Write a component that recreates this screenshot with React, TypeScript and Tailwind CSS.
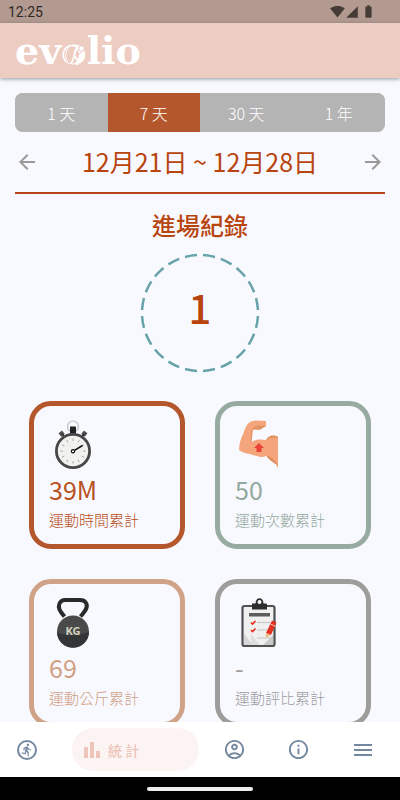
import React from "react";
import {
  MdArrowBack,
  MdArrowForward,
  MdBarChart,
  MdBatteryFull,
  MdDirectionsRun,
  MdInfoOutline,
  MdMenu,
  MdOutlineAccountCircle,
  MdSignalCellular4Bar,
  MdSignalWifi4Bar,
} from "react-icons/md";

const ranges = ["1 天", "7 天", "30 天", "1 年"];

const StopwatchIcon = () => {
  const ticks = Array.from({ length: 12 }, (_, i) => i * 30);
  return (
    <svg width="46" height="50" viewBox="0 0 46 50" fill="none">
      <circle cx="24" cy="6.5" r="5.5" stroke="#b9bdc4" strokeWidth="1.2" />
      <rect x="21" y="6.5" width="6" height="7" fill="#222" />
      <rect x="-2.2" y="-2" width="4.4" height="4.4" fill="#4d4d4d" transform="translate(12.5 13.5) rotate(-38)" />
      <rect x="-2.2" y="-2" width="4.4" height="4.4" fill="#4d4d4d" transform="translate(35.5 13.5) rotate(38)" />
      <path d="M13 14l3 4M35 14l-3 4" stroke="#333" strokeWidth="2" />
      <circle cx="24" cy="31" r="16.6" fill="#f1f1ef" stroke="#474747" strokeWidth="2.8" />
      {ticks.map((angle) => (
        <path key={angle} d="M24 18.5v2.4" stroke="#999" strokeWidth="0.8" transform={`rotate(${angle} 24 31)`} />
      ))}
      <path d="M25.5 30.3l8-4.8" stroke="#111" strokeWidth="1.5" />
      <circle cx="24" cy="31.3" r="1.6" fill="#fff" stroke="#111" strokeWidth="1.2" />
    </svg>
  );
};

const ArmIcon = () => (
  <svg width="46" height="50" viewBox="0 0 46 50">
    <path d="M30 22C32 17 35 15.500 38 15.500C40 15.500 42 16 43 17V49C42.500 46 42 45 39 43C34 40 32 37 30 34z" fill="#df905f" />
    <path d="M31 21C34 18 37 17 43 18V46C41 40 36 37 31 35z" fill="#f5a57c" />
    <path
      d="M15 2Q18 .5 22 .5L31 1V6.500Q28 7 26 9Q25 10 22 9.500H18C17 13 17 17 17 22Q20 19.500 25 19.500C30 19.500 34 21 35 25C35 31 34 35 30 36.500Q26 37.500 22 36Q18 35.500 15 34Q8 33 4 30C4 24 6 18 8.500 13C10 8 12 4 15 2z"
      fill="#f5a57c"
    />
    <path d="M17 9.500Q19 5.500 23 5.500H28L31 6.500Q28 7 26 9Q25 10 22 9.500H18C17 13 17 17 17 22Q14 17 17 9.500z" fill="#e39467" />
    <path d="M24 23l5 5h-2.500v4h-5v-4H19z" fill="#ea4335" />
  </svg>
);

const KettlebellIcon = () => (
  <svg width="46" height="50" viewBox="0 0 46 50">
    <path
      d="M15.500 18.500C11 13 8.500 10 10.500 5.500Q12 2 16 2h15q5 0 6.500 4c1.500 4-2 8-6 12.500"
      fill="none"
      stroke="#292b2a"
      strokeWidth="4"
    />
    <circle cx="24" cy="33.500" r="16" fill="#4a4a4a" />
    <path d="M8 34c9 4.500 23 4 32 0c-1 21-31 21-32 0z" fill="#333536" />
    <text
      x="24"
      y="37"
      textAnchor="middle"
      fill="#d0d3bd"
      className="font-['Noto_Sans'] text-[11px] font-bold"
    >
      KG
    </text>
  </svg>
);

const ClipboardIcon = () => (
  <svg width="46" height="50" viewBox="0 0 46 50" fill="none">
    <rect x="7.500" y="8" width="32" height="40" rx="2" fill="#f0f0f0" stroke="#4e5052" strokeWidth="2.200" />
    <path d="M38 37L28 47h10z" fill="#c9c9c9" />
    <path d="M9 36l9 11H9z" fill="#d6d6d6" />
    <path d="M16 36l9 11h-9z" fill="#dedede" />
    <path d="M17 5.500h3.500c0-7 8-7 8 0H31q1 0 1 1v5H17z" fill="#2d2d2d" />
    <circle cx="24.500" cy="4" r="2" fill="#f8f9ff" />
    <rect x="14" y="15" width="21" height="3.500" fill="#5b5d5f" />
    <path d="M22 24.500h13M22 32h10M22 40h13" stroke="#c4c4c4" strokeWidth="1.200" />
    <path d="M16 24.500l1.500 1.500 3-3M16 32l1.500 1.500 3-3" stroke="#ea2a1d" strokeWidth="1.600" />
    <path d="M37 22.500l4.500 2L36 37l-5-2z" fill="#e23022" />
    <path d="M35.500 26l5 2.500" stroke="#f6c3ba" strokeWidth="1" />
    <path d="M31 35l5 2-5.500 3z" fill="#edb886" />
  </svg>
);

const stats = [
  { value: "39M", label: "運動時間累計", tone: "border-[#b5572c] text-[#b8501d]", icon: <StopwatchIcon /> },
  { value: "50", label: "運動次數累計", tone: "border-[#98aba1] text-[#93a99d]", icon: <ArmIcon /> },
  { value: "69", label: "運動公斤累計", tone: "border-[#d0a389] text-[#d0a085]", icon: <KettlebellIcon /> },
  { value: "-", label: "運動評比累計", tone: "border-[#9d9d9b] text-[#9d9d9d]", icon: <ClipboardIcon /> },
];

const StatusBar = () => (
  <div className="flex h-[23px] shrink-0 items-center bg-[#b29a90] pl-2 pr-6 text-[#453c38]">
    <span className="flex-1 font-[Roboto] text-sm leading-5 text-[#2e2826]">12:25</span>
    <MdSignalWifi4Bar size={15} />
    <MdSignalCellular4Bar size={14} />
    <MdBatteryFull size={15} className="ml-0.5" />
  </div>
);

const Header = () => (
  <header className="relative z-10 flex h-[55px] shrink-0 items-center bg-[#edccc2] px-[15px] shadow-[0_1px_4px_rgba(70,90,100,0.6)]">
    <h1 className="flex font-['DejaVu_Serif'] text-[38px] font-bold leading-[55px] text-white">
      <span>ev</span>
      <span className="relative">
        o
        {/* climber inside the first o */}
        <svg className="absolute left-0 top-[21px]" width="26" height="22" viewBox="0 0 26 22" fill="none">
          <ellipse cx="10.500" cy="11" rx="7.500" ry="8.800" fill="#edccc2" />
          <path d="M9 2C4 6 3 15 8 20M5 3C1 8 1 14 5 18" stroke="#fff" strokeWidth="1" />
          <path d="M16 4l-2 4M14 7l-1 6-3 7M13.500 12l3 4v5" stroke="#fff" strokeWidth="1.800" />
          <path d="M15 9l3 1.500 3-3" stroke="#edccc2" strokeWidth="1" />
          <circle cx="15.500" cy="5" r="1.400" fill="#fff" />
          <circle cx="20.500" cy="4.500" r="3.200" fill="#edccc2" />
          <circle cx="20.500" cy="4.500" r="2.200" fill="#fff" />
        </svg>
      </span>
      <span>lio</span>
    </h1>
  </header>
);

const StatCard = ({ value, label, tone, icon }: (typeof stats)[number]) => (
  <div className={`h-[148px] rounded-[22px] border-5 px-[15px] pt-[14px] ${tone}`}>
    {icon}
    <p className="text-[25px] leading-[38px]">{value}</p>
    <p className="text-[15px] font-light leading-6">{label}</p>
  </div>
);

const BottomNav = () => (
  <nav className="flex h-[55px] shrink-0 items-center bg-white pr-[25px] pl-[17px] text-[#74889f]">
    <button aria-label="運動" className="flex size-5 items-center justify-center rounded-full border-2">
      <MdDirectionsRun size={14} className="shrink-0" />
    </button>
    <button className="ml-[35px] flex h-[43px] w-[127px] items-center gap-1 rounded-full bg-[#fbf4f2] pl-2 text-sm font-medium text-[#edc5ba]">
      <MdBarChart size={24} />
      <span>統 計</span>
    </button>
    <div className="flex flex-1 justify-between pl-6">
      <button aria-label="帳號">
        <MdOutlineAccountCircle size={23} />
      </button>
      <button aria-label="資訊">
        <MdInfoOutline size={23} />
      </button>
      <button aria-label="選單">
        <MdMenu size={24} />
      </button>
    </div>
  </nav>
);

const App = () => {
  return (
    <div className="flex h-screen flex-col bg-[#f8f9ff] font-['Noto_Sans_CJK_TC',sans-serif]">
      <StatusBar />
      <Header />
      <main className="min-h-0 flex-1 overflow-y-auto pb-8 [scrollbar-width:none]">
        <section className="px-[15px] pt-[15px] text-[#b8440e]">
          <div className="grid h-[39px] grid-cols-4 overflow-hidden rounded-lg bg-[#b4b4b4] text-base font-light text-white">
            {ranges.map((range) => (
              <button key={range} className={range === "7 天" ? "bg-[#b5572c]" : "bg-[#b4b4b4]"}>
                {range}
              </button>
            ))}
          </div>
          <div className="flex h-[62px] items-center justify-between border-b-2 border-[#b8441a]">
            <button aria-label="上一週" className="text-[#999]">
              <MdArrowBack size={24} />
            </button>
            <p className="text-[25px]">12月21日 ~ 12月28日</p>
            <button aria-label="下一週" className="text-[#999]">
              <MdArrowForward size={24} />
            </button>
          </div>
          <h2 className="pt-3 text-center text-2xl font-medium leading-[38px]">進場紀錄</h2>
          <div className="relative mx-auto mt-[9px] flex size-[120px] items-center justify-center">
            <svg className="absolute inset-0" viewBox="0 0 120 120" fill="none">
              <circle
                cx="60"
                cy="60"
                r="58"
                stroke="#68a3aa"
                strokeWidth="2.500"
                pathLength="120"
                strokeDasharray="4 2"
                strokeDashoffset="-1"
              />
            </svg>
            <span className="pb-3 text-[40px] font-medium leading-none">1</span>
          </div>
        </section>
        <section className="grid grid-cols-2 gap-[30px] px-[29px] pt-7">
          {stats.map((stat) => (
            <StatCard key={stat.label} {...stat} />
          ))}
        </section>
      </main>
      <BottomNav />
      <div className="flex h-[23px] shrink-0 items-center justify-center bg-black">
        <div className="h-1 w-[106px] rounded-full bg-[#eee]" />
      </div>
    </div>
  );
};

export default App;
